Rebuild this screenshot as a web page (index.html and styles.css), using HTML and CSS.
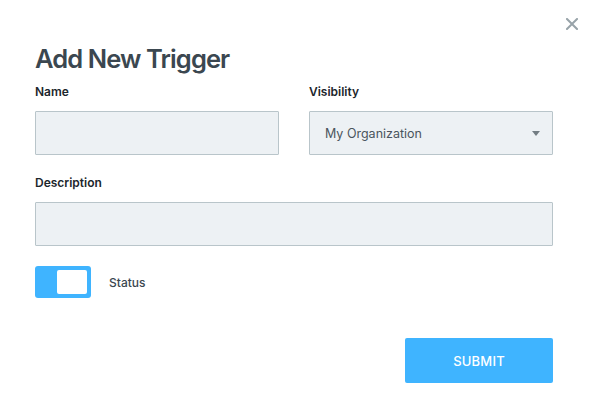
FILE: index.html
```html
<!DOCTYPE html>
<html lang="en">
<head>
<meta charset="utf-8">
<title>Add New Trigger</title>
<link rel="stylesheet" href="styles.css">
</head>
<body>
<div class="modal">
  <button class="close" aria-label="Close">
    <svg width="12" height="12" viewBox="0 0 12 12"><path d="M1 1L11 11M11 1L1 11" stroke="#98a3a9" stroke-width="2" stroke-linecap="square"/></svg>
  </button>
  <h1 class="title">Add New Trigger</h1>
  <div class="row">
    <div class="field">
      <label class="label">Name</label>
      <div class="input"></div>
    </div>
    <div class="field">
      <label class="label">Visibility</label>
      <div class="input select">
        <span class="select-text">My Organization</span>
        <span class="caret"></span>
      </div>
    </div>
  </div>
  <div class="field field-desc">
    <label class="label">Description</label>
    <div class="input"></div>
  </div>
  <div class="status-row">
    <div class="toggle"><div class="knob"></div></div>
    <span class="status-label">Status</span>
  </div>
  <div class="actions">
    <button class="submit">SUBMIT</button>
  </div>
</div>
</body>
</html>
```
FILE: styles.css
```css
* { box-sizing: border-box; }
html, body { margin: 0; padding: 0; background: #fff; }
body { font-family: Inter, "Noto Sans", sans-serif; color: #1f2a30; }
.modal {
  position: relative;
  width: 589px;
  height: 404px;
  padding: 0 36px 0 35px;
}
.close {
  position: absolute;
  top: 18px;
  right: 11px;
  width: 12px;
  height: 12px;
  padding: 0;
  border: 0;
  background: none;
  display: flex;
}
.title {
  margin: 0;
  padding-top: 43px;
  font-size: 25.5px;
  line-height: 32px;
  font-weight: 600;
  letter-spacing: -0.9px;
  color: #3b4750;
}
.row {
  display: grid;
  grid-template-columns: 244px 244px;
  column-gap: 30px;
  margin-top: 10px;
}
.field { display: flex; flex-direction: column; }
.label {
  font-size: 12px;
  line-height: 14px;
  font-weight: 600;
  color: #1c262c;
  height: 14px;
  margin-bottom: 12px;
}
.input {
  height: 44px;
  background: #edf1f4;
  border: 1px solid #b9c5ca;
  border-radius: 1px;
}
.select {
  display: flex;
  align-items: center;
  justify-content: space-between;
  padding: 0 12px 0 15px;
}
.select-text {
  font-size: 12.5px;
  color: #4a555d;
}
.caret {
  width: 0; height: 0;
  border-left: 4px solid transparent;
  border-right: 4px solid transparent;
  border-top: 5px solid #737d83;
}
.field-desc { margin-top: 21px; }
.status-row {
  display: flex;
  align-items: center;
  margin-top: 20px;
}
.toggle {
  width: 56px;
  height: 32px;
  background: #3fb4ff;
  border-radius: 3px;
  display: flex;
  align-items: center;
  justify-content: flex-end;
  padding-right: 4px;
}
.knob {
  width: 30px;
  height: 24px;
  background: #fff;
  border-radius: 2px;
}
.status-label {
  margin-left: 18px;
  font-size: 12px;
  font-weight: 500;
  color: #3b4750;
}
.actions {
  display: flex;
  justify-content: flex-end;
  margin-top: 40px;
}
.submit {
  width: 148px;
  height: 45px;
  border: 0;
  border-radius: 2px;
  background: #3fb4ff;
  color: #fff;
  font-family: Inter, "Noto Sans", sans-serif;
  font-size: 13px;
  font-weight: 500;
  letter-spacing: 0.2px;
}
```
